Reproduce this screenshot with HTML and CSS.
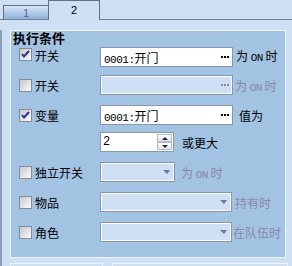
FILE: index.html
```html
<!DOCTYPE html>
<html lang="zh">
<head>
<meta charset="UTF-8">
<meta name="viewport" content="width=device-width, initial-scale=1.0">
<title>执行条件</title>
<link rel="stylesheet" href="styles.css">
</head>
<body>
<div class="tabs">
    <div class="tab">1</div>
    <div class="tab active">2</div>
</div>

<div class="panel">
    <div class="group">
        <div class="group-title">执行条件</div>

        <div class="row first">
            <span class="check">
                <svg width="11" height="11" viewBox="0 0 11 11"><polyline points="2,5 4,7.5 9,2" fill="none" stroke="#22328c" stroke-width="2"/></svg>
            </span>
            <span class="label">开关</span>
            <div class="field wide"><span class="val"><span class="en">0001:</span>开门</span><span class="dots"></span></div>
            <span class="suffix gap3">为 <span class="en">ON</span> 时</span>
        </div>

        <div class="row r2">
            <span class="check"></span>
            <span class="label">开关</span>
            <div class="field wide off"><span class="val"></span><span class="dots"></span></div>
            <span class="suffix gap2 off">为 <span class="en">ON</span> 时</span>
        </div>

        <div class="row r3">
            <span class="check">
                <svg width="11" height="11" viewBox="0 0 11 11"><polyline points="2,5 4,7.5 9,2" fill="none" stroke="#22328c" stroke-width="2"/></svg>
            </span>
            <span class="label">变量</span>
            <div class="field wide"><span class="val"><span class="en">0001:</span>开门</span><span class="dots"></span></div>
            <span class="suffix gap6">值为</span>
        </div>

        <div class="row r4">
            <div class="spin">
                <span class="num en">2</span>
                <div class="btns">
                    <span class="btn"><i class="up"></i></span>
                    <span class="btn"><i class="down"></i></span>
                </div>
            </div>
            <span class="suffix gap8">或更大</span>
        </div>

        <div class="row r5">
            <span class="check"></span>
            <span class="label">独立开关</span>
            <div class="field combo short off"><i class="arrow"></i></div>
            <span class="suffix gap7 off">为 <span class="en">ON</span> 时</span>
        </div>

        <div class="row r5">
            <span class="check"></span>
            <span class="label">物品</span>
            <div class="field combo long off"><i class="arrow"></i></div>
            <span class="suffix gap3 off">持有时</span>
        </div>

        <div class="row r5">
            <span class="check"></span>
            <span class="label">角色</span>
            <div class="field combo long off"><i class="arrow"></i></div>
            <span class="suffix gap1 off">在队伍时</span>
        </div>
    </div>

    <div class="bottom">
        <div class="box small"></div>
        <div class="box big"></div>
    </div>
</div>
</body>
</html>
```

FILE: styles.css
```css
body {
    margin: 0;
    width: 292px;
    height: 266px;
    overflow: hidden;
    background: #cfe0f4;
    font-family: "Noto Sans CJK SC", sans-serif;
    font-size: 12px;
    color: #000;
}
.en {
    font-family: "Liberation Mono", monospace;
    font-size: 11px;
    letter-spacing: -0.5px;
}
.tabs {
    display: flex;
    align-items: flex-end;
    height: 19px;
    padding-left: 3px;
    border-bottom: 1px solid #6f7f98;
}
.tab {
    width: 44px;
    height: 13px;
    border: 1px solid #61718b;
    border-bottom: none;
    background: linear-gradient(#d6e4f4, #91b2da);
    color: #4f6a90;
    font-family: "Liberation Sans", sans-serif;
    font-size: 11px;
    line-height: 15px;
    text-align: center;
}
.tab.active {
    width: 50px;
    height: 19px;
    margin-left: -1px;
    margin-bottom: -1px;
    background: #cfe0f4;
    color: #000;
    line-height: 18px;
}
.panel {
    height: 246px;
    border-left: 2px solid #8d9fbb;
}
.group {
    width: 274px;
    height: 226px;
    margin: 10px 0 0 8px;
    border: 1px solid #eef4fb;
    background: #a3c3e3;
}
.group-title {
    height: 16px;
    padding-left: 2px;
    font-size: 13px;
    font-weight: bold;
    line-height: 13px;
}
.row {
    display: flex;
    align-items: center;
    height: 20px;
    padding-left: 8px;
}
.row.first { align-items: flex-start; }
.row.first .check { margin-top: 1px; }
.row.first .label { line-height: 17px; }
.row.r2 { margin-top: 8px; }
.row.r3 { margin-top: 10px; }
.row.r4 { margin-top: 7px; }
.row.r5 { margin-top: 10px; }
.check {
    box-sizing: border-box;
    width: 13px;
    height: 13px;
    flex: none;
    border: 1px solid #878b96;
    background: linear-gradient(135deg, #c6c8cc, #fbfbfb);
}
.check svg { display: block; }
.label {
    width: 65px;
    margin-left: 3px;
}
.field {
    box-sizing: border-box;
    height: 20px;
    display: flex;
    align-items: center;
    justify-content: space-between;
    padding: 0 3px 0 3px;
    border: 1px solid #8797b2;
    background: #fff;
}
.field.off {
    background: #cfe0f4;
    box-shadow: inset 0 0 0 1px #fff;
}
.wide { width: 133px; }
.short { width: 75px; }
.long { width: 132px; }
.combo { justify-content: flex-end; padding-right: 4px; }
.dots {
    width: 2px;
    height: 2px;
    margin-right: 6px;
    background: #000;
    box-shadow: 3px 0 #000, 6px 0 #000;
}
.off .dots {
    background: #8886ae;
    box-shadow: 3px 0 #8886ae, 6px 0 #8886ae;
}
.arrow {
    width: 0;
    height: 0;
    border-left: 4px solid transparent;
    border-right: 3px solid transparent;
    border-top: 4px solid #73729e;
}
.suffix { white-space: nowrap; }
.suffix.off { color: #8886ae; }
.gap1 { margin-left: 1px; }
.gap2 { margin-left: 2px; }
.gap3 { margin-left: 3px; }
.gap6 { margin-left: 6px; }
.gap7 { margin-left: 6px; }
.gap8 { margin-left: 8px; }
.spin {
    box-sizing: border-box;
    width: 74px;
    height: 20px;
    margin-left: 81px;
    display: flex;
    border: 1px solid #8797b2;
    background: #fff;
}
.spin .num {
    flex: 1;
    padding-left: 2px;
    font-size: 12px;
    line-height: 18px;
}
.btns {
    display: flex;
    flex-direction: column;
    width: 16px;
    padding: 1px 1px 1px 0;
    box-sizing: border-box;
}
.btn {
    box-sizing: border-box;
    flex: 1;
    display: flex;
    align-items: center;
    justify-content: center;
    border: 1px solid #b4bccb;
    background: linear-gradient(#ffffff, #dfe4ec);
}
.btn i {
    width: 0;
    height: 0;
    border-left: 3px solid transparent;
    border-right: 3px solid transparent;
}
.btn .up { border-bottom: 3px solid #222; }
.btn .down { border-top: 3px solid #222; }
.bottom {
    display: flex;
    gap: 9px;
    margin: 5px 0 0 8px;
}
.box {
    height: 10px;
    border: 1px solid #eef4fb;
    border-bottom: none;
}
.box.small { width: 91px; }
.box.big { width: 174px; }
```
